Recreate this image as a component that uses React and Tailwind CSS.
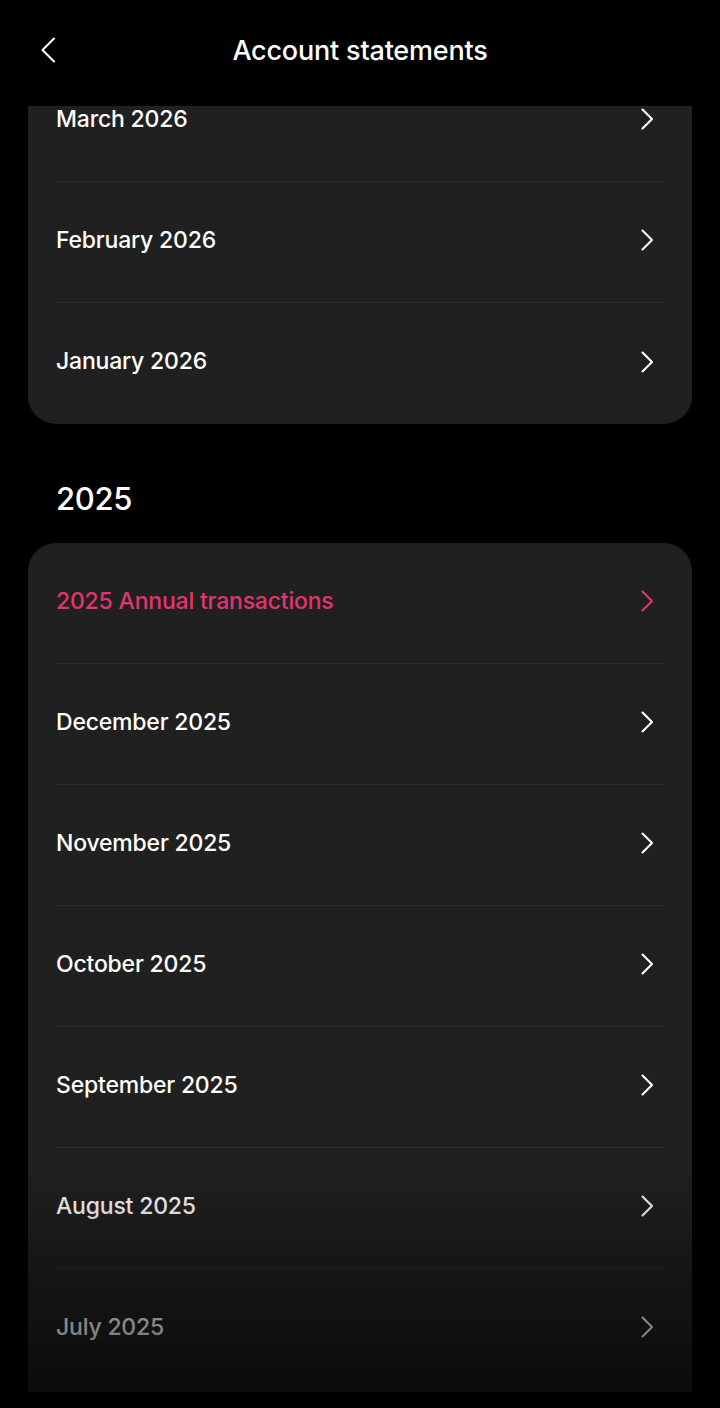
const FONT = { fontFamily: "Inter, 'Liberation Sans', sans-serif" };

const CURRENT_YEAR = ["March 2026", "February 2026", "January 2026"];
const LAST_YEAR = [
  "December 2025",
  "November 2025",
  "October 2025",
  "September 2025",
  "August 2025",
  "July 2025",
];

function Chevron({ className = "stroke-white" }) {
  return (
    <svg viewBox="0 0 14 24" className={"w-[14px] h-[24px] " + className} fill="none">
      <path d="M2.5 2.5 12 12l-9.5 9.5" strokeWidth={2.1} strokeLinecap="round" strokeLinejoin="round" />
    </svg>
  );
}

function Row({ label, pink, last }) {
  return (
    <div
      className={
        "flex items-center justify-between h-[121px] pb-[4px] " +
        (last ? "" : "border-b border-[#2c2c2c]")
      }
    >
      <span className={"text-[23px] font-medium tracking-[-0.2px] " + (pink ? "text-[#e3346f]" : "text-white")}>
        {label}
      </span>
      <div className="mr-[10px]">
        <Chevron className={pink ? "stroke-[#e3346f]" : "stroke-white"} />
      </div>
    </div>
  );
}

export default function App() {
  return (
    <div className="w-[720px] h-[1408px] bg-black flex flex-col overflow-hidden" style={FONT}>
      {/* header */}
      <div className="h-[106px] shrink-0 relative flex items-center justify-center">
        <button className="absolute left-[39px] top-[37px]">
          <svg viewBox="0 0 18 26" className="w-[18px] h-[26px] stroke-white" fill="none">
            <path d="M15 1.5 3.5 13 15 24.5" strokeWidth={2.1} strokeLinecap="round" strokeLinejoin="round" />
          </svg>
        </button>
        <h1 className="text-[27px] font-medium text-white tracking-[-0.2px] pb-[4px]">Account statements</h1>
      </div>

      {/* scrolled list */}
      <div className="h-[1286px] shrink-0 relative overflow-hidden">
        <div className="mx-[28px] bg-[#202020] rounded-b-[28px] overflow-hidden">
          <div className="px-[28px] -mt-[45px]">
            {CURRENT_YEAR.map((m, i) => (
              <Row key={m} label={m} last={i === CURRENT_YEAR.length - 1} />
            ))}
          </div>
        </div>

        <div className="h-[119px] pt-[56px] px-[56px]">
          <h2 className="text-[31px] leading-[38px] font-medium text-white tracking-[-0.3px]">2025</h2>
        </div>

        <div className="mx-[28px] bg-[#202020] rounded-[28px] px-[28px] pb-[60px]">
          <Row label="2025 Annual transactions" pink />
          {LAST_YEAR.map((m) => (
            <Row key={m} label={m} />
          ))}
        </div>

        {/* bottom fade */}
        <div className="absolute left-0 right-0 bottom-0 h-[230px] bg-gradient-to-b from-black/0 via-black/35 to-black/65 pointer-events-none" />
      </div>

      <div className="h-[16px] shrink-0 bg-black" />
    </div>
  );
}
